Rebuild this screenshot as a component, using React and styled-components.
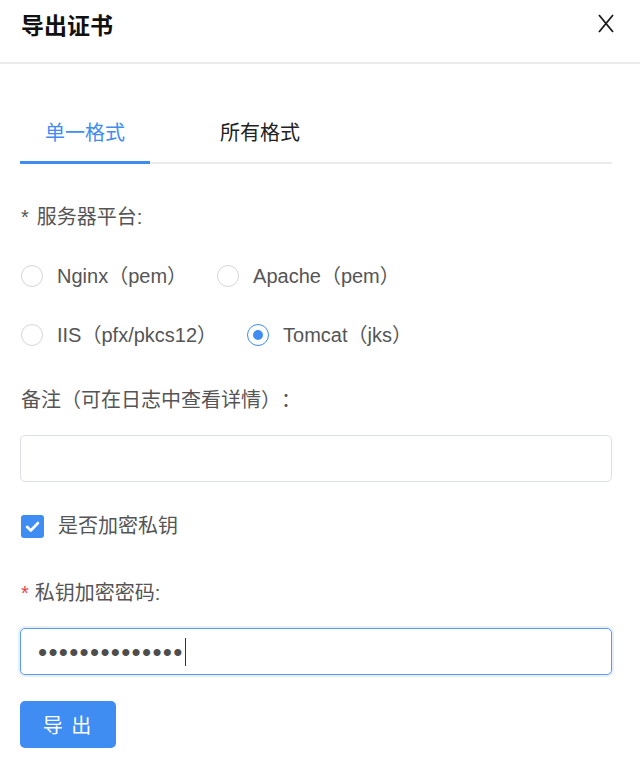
import React from "react";
import styled, { createGlobalStyle } from "styled-components";

const BLUE = "#3f8cf2";

const Global = createGlobalStyle`
  html, body { margin: 0; padding: 0; background: #fff; }
  body {
    font-family: "Liberation Sans", "Noto Sans CJK SC", sans-serif;
    color: #555;
    -webkit-font-smoothing: antialiased;
    text-spacing-trim: space-all;
  }
  * { box-sizing: border-box; }
`;

const Dialog = styled.div`
  width: 640px;
  background: #fff;
`;

const Header = styled.div`
  height: 64px;
  display: flex;
  justify-content: space-between;
  align-items: flex-start;
  padding: 10px 26px 0 21px;
  border-bottom: 2px solid #ebebeb;
`;

const Title = styled.h1`
  margin: 0;
  font-size: 23px;
  line-height: 28px;
  font-weight: 700;
  color: #111;
  font-family: "Noto Sans CJK SC", sans-serif;
`;

const CloseButton = styled.button`
  border: 0;
  background: none;
  padding: 0;
  margin-top: 4px;
  width: 16px;
  height: 19px;
  display: flex;
  cursor: pointer;
`;

const Body = styled.div`
  padding: 38px 28px 0 20px;
  display: flex;
  flex-direction: column;
`;

const TabBar = styled.div`
  display: flex;
  gap: 45px;
  border-bottom: 2px solid #ebebeb;
`;

const Tab = styled.div`
  padding: 16px 25px 15px;
  margin-bottom: -2px;
  font-size: 20px;
  line-height: 28px;
  font-family: "Noto Sans CJK SC", sans-serif;
  color: ${(p) => (p.$active ? BLUE : "#222")};
  border-bottom: 3px solid ${(p) => (p.$active ? BLUE : "transparent")};
`;

const Label = styled.div`
  margin-top: ${(p) => p.$mt}px;
  font-size: 20px;
  line-height: 28px;
  color: #555;
  padding-left: 1px;
`;

const Star = styled.span`
  color: ${(p) => (p.$red ? "#e54545" : "#555")};
  margin-right: ${(p) => p.$gap}px;
`;

const RadioRow = styled.div`
  margin-top: ${(p) => p.$mt}px;
  display: flex;
  align-items: center;
  gap: 30px;
  padding-left: 1px;
`;

const RadioItem = styled.label`
  display: flex;
  align-items: center;
  gap: 14px;
  font-size: 20px;
  line-height: 28px;
  color: #555;
  cursor: pointer;
`;

const RadioCircle = styled.span`
  width: 22px;
  height: 22px;
  border-radius: 50%;
  border: 1px solid ${(p) => (p.$checked ? BLUE : "#d6d6d6")};
  display: flex;
  align-items: center;
  justify-content: center;
  flex-shrink: 0;
  &::after {
    content: "";
    width: 10px;
    height: 10px;
    border-radius: 50%;
    background: ${(p) => (p.$checked ? BLUE : "transparent")};
  }
`;

const TextInput = styled.input`
  margin-top: ${(p) => p.$mt}px;
  width: 100%;
  height: 47px;
  border: 1px solid #dcdfe6;
  border-radius: 5px;
  padding: 0 18px;
  font-size: 18px;
  outline: none;
  background: #fff;
`;

const CheckRow = styled.label`
  margin-top: 30px;
  display: flex;
  align-items: center;
  gap: 14px;
  font-size: 20px;
  line-height: 28px;
  color: #555;
  padding-left: 1px;
`;

const CheckBox = styled.span`
  width: 23px;
  height: 23px;
  border-radius: 3px;
  background: ${BLUE};
  display: flex;
  align-items: center;
  justify-content: center;
`;

const PasswordField = styled.div`
  margin-top: 21px;
  height: 47px;
  border: 1.5px solid #5b9af0;
  border-radius: 5px;
  box-shadow: 0 0 0 2px rgba(64, 140, 242, 0.13);
  display: flex;
  align-items: center;
  padding-left: 17px;
`;

const Dots = styled.span`
  font-family: "Liberation Sans", sans-serif;
  font-size: 26px;
  letter-spacing: 1.3px;
  color: #4d4d4d;
  line-height: 28px;
`;

const Caret = styled.span`
  display: inline-block;
  width: 1.5px;
  height: 28px;
  background: #333;
  margin-left: 1px;
`;

const SubmitButton = styled.button`
  margin-top: 26px;
  width: 96px;
  height: 47px;
  border: 0;
  border-radius: 5px;
  background: ${BLUE};
  color: #fff;
  font-size: 20px;
  font-family: "Noto Sans CJK SC", sans-serif;
  letter-spacing: 2px;
  cursor: pointer;
`;

const Radio = ({ checked, children }) => (
  <RadioItem>
    <RadioCircle $checked={checked} />
    <span>{children}</span>
  </RadioItem>
);

export default function App() {
  return (
    <>
      <Global />
      <Dialog>
        <Header>
          <Title>导出证书</Title>
          <CloseButton aria-label="关闭">
            <svg width="16" height="19" viewBox="0 0 16 19">
              <path d="M1 1 L15 18 M15 1 L1 18" stroke="#1a1a1a" strokeWidth="1.8" fill="none" />
            </svg>
          </CloseButton>
        </Header>
        <Body>
          <TabBar>
            <Tab $active>单一格式</Tab>
            <Tab>所有格式</Tab>
          </TabBar>

          <Label $mt={39}>
            <Star $gap={8}>*</Star>服务器平台:
          </Label>
          <RadioRow $mt={31}>
            <Radio>Nginx（pem）</Radio>
            <Radio>Apache（pem）</Radio>
          </RadioRow>
          <RadioRow $mt={31}>
            <Radio>IIS（pfx/pkcs12）</Radio>
            <Radio checked>Tomcat（jks）</Radio>
          </RadioRow>

          <Label $mt={37}>备注（可在日志中查看详情）：</Label>
          <TextInput $mt={21} type="text" />

          <CheckRow>
            <CheckBox>
              <svg width="23" height="23" viewBox="0 0 23 23">
                <path d="M6 11.8 L9.8 15.5 L17 8" stroke="#fff" strokeWidth="2.6" fill="none" strokeLinecap="round" strokeLinejoin="round" />
              </svg>
            </CheckBox>
            是否加密私钥
          </CheckRow>

          <Label $mt={39}>
            <Star $red $gap={6}>*</Star>私钥加密密码:
          </Label>
          <PasswordField>
            <Dots>••••••••••••••</Dots>
            <Caret />
          </PasswordField>

          <div>
            <SubmitButton>导 出</SubmitButton>
          </div>
        </Body>
      </Dialog>
    </>
  );
}
